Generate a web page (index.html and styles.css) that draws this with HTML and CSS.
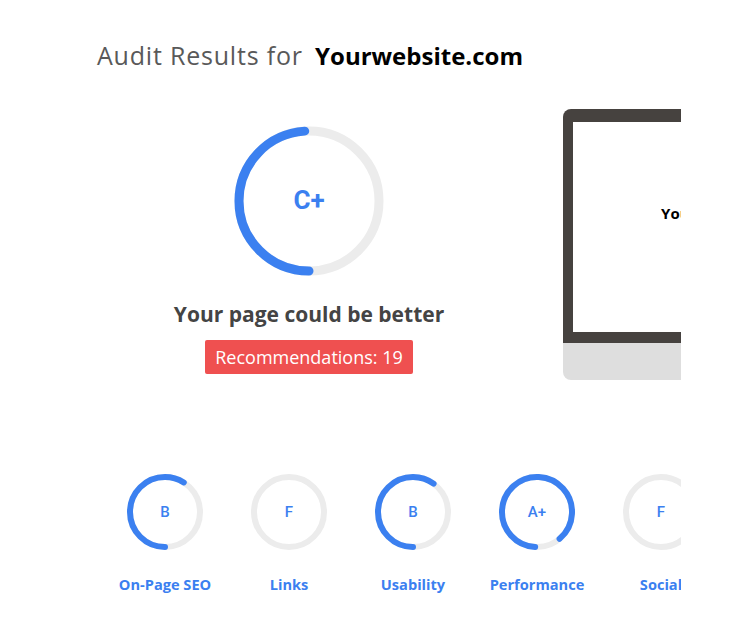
FILE: index.html
```html
<!DOCTYPE html>
<html>
    <head>
        <meta charset="UTF-8">
        <meta name="viewport" content="width=device-width, initial-scale=1.0">
        <link rel="stylesheet" href="styles.css">
    </head>

    <body>
        <div class="frame">
            <h1 class="title">Audit Results for <span class="site">Yourwebsite.com</span></h1>

            <div class="summary">
                <div class="score">
                    <svg class="ring big" width="150" height="150" viewBox="0 0 150 150">
                        <circle class="track" cx="75" cy="75" r="70"></circle>
                        <circle class="arc" cx="75" cy="75" r="70" pathLength="100" stroke-dasharray="49 100" transform="rotate(90 75 75)"></circle>
                        <text x="75" y="76">C+</text>
                    </svg>
                    <div class="verdict">Your page could be better</div>
                    <div class="badge">Recommendations: 19</div>
                </div>

                <div class="laptop">
                    <div class="bezel">
                        <div class="screen">Yourwebsite.com</div>
                    </div>
                    <div class="base"></div>
                </div>
            </div>

            <div class="grades">
                <div class="grade">
                    <svg class="ring" width="80" height="80" viewBox="0 0 80 80">
                        <circle class="track" cx="40" cy="40" r="35"></circle>
                        <circle class="arc" cx="40" cy="40" r="35" pathLength="100" stroke-dasharray="59 100" transform="rotate(90 40 40)"></circle>
                        <text x="40" y="41">B</text>
                    </svg>
                    <div class="label">On-Page SEO</div>
                </div>
                <div class="grade">
                    <svg class="ring" width="80" height="80" viewBox="0 0 80 80">
                        <circle class="track" cx="40" cy="40" r="35"></circle>
                        <text x="40" y="41">F</text>
                    </svg>
                    <div class="label">Links</div>
                </div>
                <div class="grade">
                    <svg class="ring" width="80" height="80" viewBox="0 0 80 80">
                        <circle class="track" cx="40" cy="40" r="35"></circle>
                        <circle class="arc" cx="40" cy="40" r="35" pathLength="100" stroke-dasharray="60 100" transform="rotate(90 40 40)"></circle>
                        <text x="40" y="41">B</text>
                    </svg>
                    <div class="label">Usability</div>
                </div>
                <div class="grade">
                    <svg class="ring" width="80" height="80" viewBox="0 0 80 80">
                        <circle class="track" cx="40" cy="40" r="35"></circle>
                        <circle class="arc" cx="40" cy="40" r="35" pathLength="100" stroke-dasharray="88 100" transform="rotate(93 40 40)"></circle>
                        <text x="40" y="41">A+</text>
                    </svg>
                    <div class="label">Performance</div>
                </div>
                <div class="grade">
                    <svg class="ring" width="80" height="80" viewBox="0 0 80 80">
                        <circle class="track" cx="40" cy="40" r="35"></circle>
                        <text x="40" y="41">F</text>
                    </svg>
                    <div class="label">Social</div>
                </div>
            </div>
        </div>
    </body>
</html>
```

FILE: styles.css
```css
body {
    margin: 0;
    background: #fff;
    font-family: "Open Sans", "Liberation Sans", sans-serif;
}

.frame {
    width: 681px;
    overflow: hidden;
    padding: 38px 0 0 97px;
    box-sizing: border-box;
}

.title {
    margin: 0;
    font-size: 25px;
    line-height: 34px;
    font-weight: 400;
    letter-spacing: 0.8px;
    color: #595959;
    white-space: nowrap;
}
.title .site {
    margin-left: 5px;
    font-size: 24px;
    font-weight: 700;
    letter-spacing: 0;
    color: #000;
}

.summary {
    display: flex;
    align-items: flex-start;
    gap: 42px;
    margin-top: 36px;
}

.score {
    width: 424px;
    flex: none;
    display: flex;
    flex-direction: column;
    align-items: center;
    padding-top: 17px;
}

.ring {
    display: block;
}
.ring .track {
    fill: none;
    stroke: #ececec;
    stroke-width: 6;
}
.ring .arc {
    fill: none;
    stroke: #3b80f0;
    stroke-width: 6;
    stroke-linecap: round;
}
.ring text {
    fill: #3b80f0;
    font-family: Roboto, "Liberation Sans", sans-serif;
    font-weight: 500;
    font-size: 15px;
    text-anchor: middle;
    dominant-baseline: middle;
}
.ring.big .track,
.ring.big .arc {
    stroke-width: 9;
}
.ring.big text {
    font-size: 26px;
    font-weight: 700;
}

.verdict {
    margin-top: 24px;
    font-size: 21px;
    line-height: 28px;
    font-weight: 700;
    color: #444;
}

.badge {
    margin-top: 12px;
    padding: 5px 10px;
    font-size: 18px;
    line-height: 24px;
    color: #fff;
    background-color: #ef5050;
    border-radius: 2px;
}

.laptop {
    width: 326px;
    flex: none;
}
.bezel {
    padding: 13px 10px 11px 10px;
    background-color: #46423f;
    border-radius: 8px 8px 0 0;
}
.screen {
    height: 210px;
    background: #fff;
    display: flex;
    align-items: center;
    justify-content: center;
    padding-bottom: 28px;
    box-sizing: border-box;
    font-size: 15px;
    font-weight: 700;
    color: #000;
}
.base {
    height: 37px;
    background-color: #dedede;
    border-radius: 0 0 8px 8px;
}

.grades {
    display: flex;
    margin: 92px 0 0 6px;
}
.grade {
    width: 124px;
    flex: none;
    display: flex;
    flex-direction: column;
    align-items: center;
}
.label {
    margin-top: 23px;
    font-size: 14.6px;
    line-height: 19px;
    font-weight: 700;
    color: #3b80f0;
    white-space: nowrap;
}
```
